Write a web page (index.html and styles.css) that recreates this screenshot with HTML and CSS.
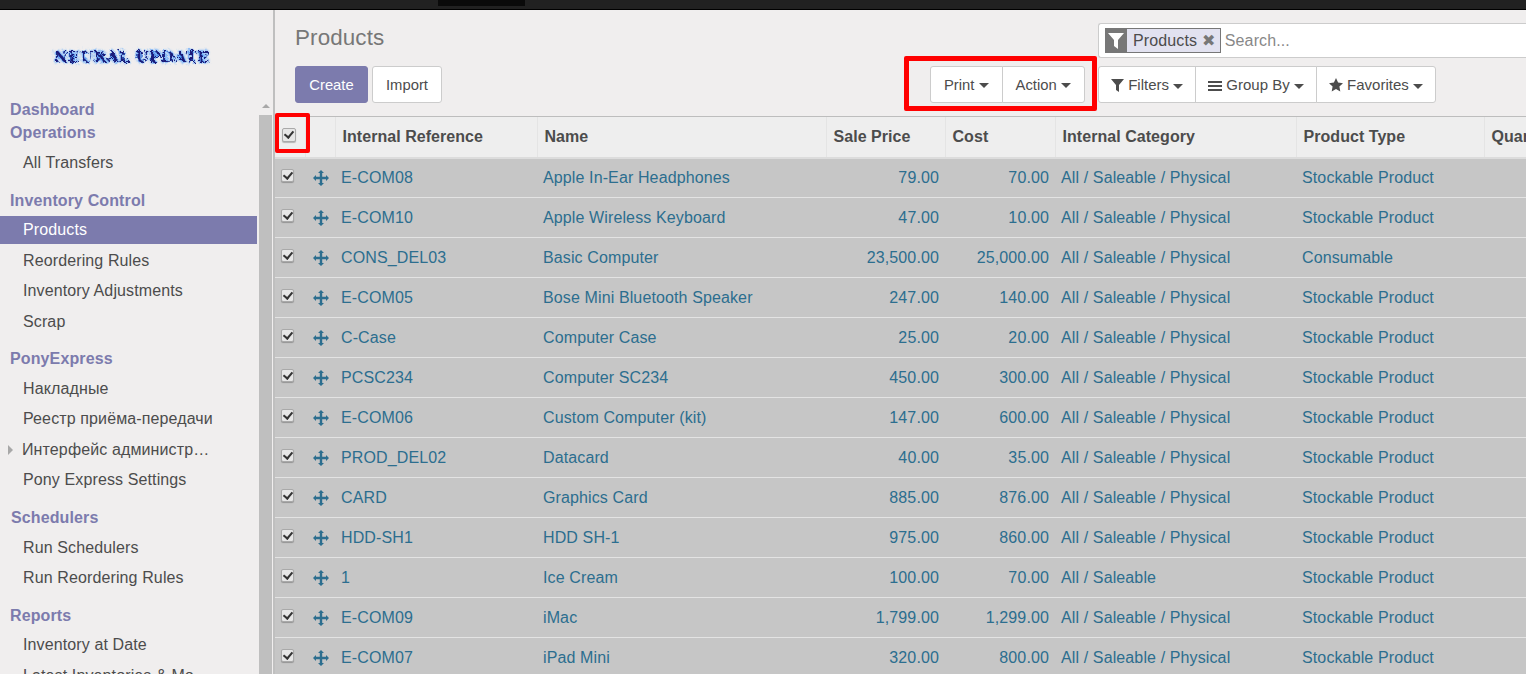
FILE: index.html
```html
<!DOCTYPE html>
<html lang="en">

<head>
    <meta charset="UTF-8">
    <title>Products</title>
    <link rel="stylesheet" href="styles.css">
</head>

<body>
    <svg class="defs" width="0" height="0">
        <filter id="rough" x="-5%" y="-60%" width="110%" height="220%">
            <feTurbulence type="fractalNoise" baseFrequency="0.3" numOctaves="2" seed="4"/>
            <feDisplacementMap in="SourceGraphic" scale="7"/>
        </filter>
    </svg>
    <div class="topbar"><span class="topbar-tab"></span></div>
    <div class="app">
        <aside class="sidebar">
            <div class="logo"><span class="logo-text">NEURAL UPDATE</span></div>
            <div class="menu-wrap">
                <nav class="menu">
                    <div class="menu-head first">Dashboard</div>
                    <div class="menu-head second">Operations</div>
                    <a class="menu-item">All Transfers</a>
                    <div class="menu-head">Inventory Control</div>
                    <a class="menu-item active">Products</a>
                    <a class="menu-item">Reordering Rules</a>
                    <a class="menu-item">Inventory Adjustments</a>
                    <a class="menu-item">Scrap</a>
                    <div class="menu-head">PonyExpress</div>
                    <a class="menu-item">Накладные</a>
                    <a class="menu-item">Реестр приёма-передачи</a>
                    <a class="menu-item has-sub">Интерфейс администр…</a>
                    <a class="menu-item">Pony Express Settings</a>
                    <div class="menu-head shifted">Schedulers</div>
                    <a class="menu-item">Run Schedulers</a>
                    <a class="menu-item">Run Reordering Rules</a>
                    <div class="menu-head">Reports</div>
                    <a class="menu-item">Inventory at Date</a>
                    <a class="menu-item">Latest Inventories &amp; Mo…</a>
                </nav>
                <div class="scrollbar">
                    <span class="scroll-arrow"></span>
                    <span class="scroll-thumb"></span>
                </div>
            </div>
        </aside>

        <main class="content">
            <div class="control-panel">
                <div class="cp-left">
                    <h1>Products</h1>
                    <div class="buttons">
                        <button class="btn btn-primary">Create</button>
                        <button class="btn">Import</button>
                    </div>
                </div>
                <div class="cp-mid">
                    <div class="btn-group marked">
                        <button class="btn">Print <i class="caret"></i></button>
                        <button class="btn">Action <i class="caret"></i></button>
                    </div>
                </div>
                <div class="cp-right">
                    <div class="searchbox">
                        <span class="facet-icon">
                            <svg width="16" height="17" viewBox="0 0 16 17"><path d="M0 1h16L10 8v9L6 14V8z" fill="#fff"/></svg>
                        </span>
                        <span class="facet">Products <b class="facet-x">✖</b></span>
                        <span class="search-text">Search...</span>
                    </div>
                    <div class="btn-group icons">
                        <button class="btn">
                            <svg class="icon" width="13" height="14" viewBox="0 0 13 14"><path d="M0 1h13L8 7v7L5 12V7z" fill="#4c4c4c"/></svg>
                            Filters <i class="caret"></i></button>
                        <button class="btn">
                            <svg class="icon" width="14" height="12" viewBox="0 0 14 12"><path d="M0 1h14v2H0zM0 5h14v2H0zM0 9h14v2H0z" fill="#4c4c4c"/></svg>
                            Group By <i class="caret"></i></button>
                        <button class="btn">
                            <svg class="icon" width="14" height="14" viewBox="0 0 14 14"><path d="M7 0l2.100 4.600 4.900.6-3.600 3.400.9 5L7 11.100 2.700 13.600l.9-5L0 5.200l4.900-.6z" fill="#4c4c4c"/></svg>
                            Favorites <i class="caret"></i></button>
                    </div>
                </div>
            </div>

            <table class="list">
                <colgroup>
                    <col class="c-check"><col class="c-handle"><col class="c-ref"><col class="c-name">
                    <col class="c-price"><col class="c-cost"><col class="c-cat"><col class="c-type"><col class="c-qty">
                </colgroup>
                <thead>
                    <tr>
                        <th class="check"><span class="marked-box"><span class="cb"></span></span></th>
                        <th></th>
                        <th>Internal Reference</th>
                        <th>Name</th>
                        <th>Sale Price</th>
                        <th>Cost</th>
                        <th>Internal Category</th>
                        <th>Product Type</th>
                        <th>Quantity</th>
                    </tr>
                </thead>
                <tbody id="rows"></tbody>
            </table>
        </main>
    </div>

    <script>
        var products = [
            ["E-COM08", "Apple In-Ear Headphones", "79.00", "70.00", "All / Saleable / Physical", "Stockable Product"],
            ["E-COM10", "Apple Wireless Keyboard", "47.00", "10.00", "All / Saleable / Physical", "Stockable Product"],
            ["CONS_DEL03", "Basic Computer", "23,500.00", "25,000.00", "All / Saleable / Physical", "Consumable"],
            ["E-COM05", "Bose Mini Bluetooth Speaker", "247.00", "140.00", "All / Saleable / Physical", "Stockable Product"],
            ["C-Case", "Computer Case", "25.00", "20.00", "All / Saleable / Physical", "Stockable Product"],
            ["PCSC234", "Computer SC234", "450.00", "300.00", "All / Saleable / Physical", "Stockable Product"],
            ["E-COM06", "Custom Computer (kit)", "147.00", "600.00", "All / Saleable / Physical", "Stockable Product"],
            ["PROD_DEL02", "Datacard", "40.00", "35.00", "All / Saleable / Physical", "Stockable Product"],
            ["CARD", "Graphics Card", "885.00", "876.00", "All / Saleable / Physical", "Stockable Product"],
            ["HDD-SH1", "HDD SH-1", "975.00", "860.00", "All / Saleable / Physical", "Stockable Product"],
            ["1", "Ice Cream", "100.00", "70.00", "All / Saleable", "Stockable Product"],
            ["E-COM09", "iMac", "1,799.00", "1,299.00", "All / Saleable / Physical", "Stockable Product"],
            ["E-COM07", "iPad Mini", "320.00", "800.00", "All / Saleable / Physical", "Stockable Product"]
        ];

        var handle = '<svg width="16" height="16" viewBox="0 0 16 16"><path d="M8 0l3 3H9.200v3.800H13V5l3 3-3 3V9.200H9.200V13H11l-3 3-3-3h1.800V9.200H3V11L0 8l3-3v1.800h3.800V3H5z" fill="#2c6e8f"/></svg>';
        var html = "";
        for (var i = 0; i < products.length; i++) {
            var p = products[i];
            html += '<tr><td class="check"><span class="cb"></span></td>' +
                '<td class="handle">' + handle + '</td>' +
                '<td>' + p[0] + '</td><td>' + p[1] + '</td>' +
                '<td class="num">' + p[2] + '</td><td class="num">' + p[3] + '</td>' +
                '<td>' + p[4] + '</td><td>' + p[5] + '</td><td></td></tr>';
        }
        document.getElementById("rows").innerHTML = html;
    </script>
</body>

</html>
```
FILE: styles.css
```css
*, *::before, *::after {
    box-sizing: border-box;
}

html, body {
    margin: 0;
    height: 100%;
    overflow: hidden;
}

body {
    font-family: "Liberation Sans", Arial, sans-serif;
    font-size: 16px;
    letter-spacing: 0.12px;
    color: #4c4c4c;
    background: #f0eeee;
}

.defs {
    display: block;
    height: 0;
}

.topbar {
    height: 10px;
    background: #212121;
    border-bottom: 1px solid #000;
}

.topbar-tab {
    display: block;
    width: 87px;
    height: 6px;
    margin-left: 438px;
    background: #0a0a0a;
}

.app {
    display: flex;
    height: 664px;
}

/* sidebar */
.sidebar {
    width: 275px;
    flex: none;
    border-right: 2px solid #bfbfbf;
    overflow: hidden;
}

.logo {
    height: 88px;
    padding-top: 38px;
    padding-left: 54px;
}

.logo-text {
    display: inline-block;
    font-family: "DejaVu Serif", serif;
    font-size: 15px;
    font-weight: bold;
    letter-spacing: 0.5px;
    white-space: nowrap;
    color: #1c1f7a;
    text-shadow: 0 0 3px #2f8cff, 0 0 2px #2f8cff;
    filter: url(#rough);
}

.menu-wrap {
    display: flex;
    height: 576px;
}

.menu {
    width: 257px;
    flex: none;
}

.menu-head {
    height: 23px;
    margin-top: 11.9px;
    margin-bottom: 4.5px;
    padding-left: 10px;
    line-height: 23px;
    font-weight: bold;
    color: #7c7bad;
}

.menu-head.first {
    margin-top: 0;
    margin-bottom: 0;
}

.menu-head.second {
    margin-top: 0;
    margin-bottom: 5px;
}

.menu-head.shifted {
    padding-left: 11px;
}

.menu-item {
    display: block;
    height: 28px;
    margin-bottom: 2.4px;
    padding-left: 23px;
    line-height: 28px;
    color: #4c4c4c;
    white-space: nowrap;
}

.menu-item.active {
    background: #7c7bad;
    color: #fff;
}

.menu-item.has-sub {
    position: relative;
    padding-left: 22px;
}

.menu-item.has-sub::before {
    content: "";
    position: absolute;
    left: 8px;
    top: 9px;
    border: 5px solid transparent;
    border-left-color: #a8a8a8;
    border-right-width: 0;
}

.scrollbar {
    width: 13px;
    margin-left: 2px;
    display: flex;
    flex-direction: column;
}

.scroll-arrow {
    height: 17px;
    position: relative;
}

.scroll-arrow::before {
    content: "";
    position: absolute;
    left: 3px;
    top: 6px;
    border: 4px solid transparent;
    border-bottom: 4px solid #a8a8a8;
    border-top-width: 0;
}

.scroll-thumb {
    flex: 1;
    background: #bfbfbf;
}

/* main */
.content {
    flex: 1;
    min-width: 0;
    overflow: hidden;
}

.control-panel {
    display: flex;
    height: 106px;
}

.cp-left {
    flex: none;
    width: 630px;
    padding-left: 20px;
}

h1 {
    margin: 0;
    padding-top: 15px;
    height: 56px;
    font-size: 22.4px;
    font-weight: normal;
    line-height: 26px;
    color: #777;
}

.buttons {
    display: flex;
    gap: 4px;
}

.btn {
    height: 37px;
    padding: 0 13px;
    font-family: inherit;
    font-size: 14.8px;
    color: #4c4c4c;
    background: #fff;
    border: 1px solid #ccc;
    border-radius: 3px;
    white-space: nowrap;
}

.btn-primary {
    width: 73px;
    padding: 0;
    background: #7c7bad;
    border-color: #7c7bad;
    color: #fff;
}

.cp-mid {
    flex: none;
    width: 193px;
    padding-top: 56px;
}

.btn-group {
    display: flex;
}

.btn-group .btn {
    border-radius: 0;
    margin-left: -1px;
}

.btn-group .btn:first-child {
    border-radius: 3px 0 0 3px;
    margin-left: 0;
}

.btn-group .btn:last-child {
    border-radius: 0 3px 3px 0;
}

.btn-group.icons .btn {
    padding: 0 12px;
    font-size: 15px;
}

.marked {
    position: relative;
    width: 155px;
    margin-left: 25px;
}

.marked::after {
    content: "";
    position: absolute;
    left: -26px;
    top: -10px;
    width: 193px;
    height: 55px;
    border: 5px solid #f00;
    border-radius: 2px;
}

.caret {
    display: inline-block;
    vertical-align: middle;
    border-top: 5px solid #4c4c4c;
    border-left: 5px solid transparent;
    border-right: 5px solid transparent;
}

.icon {
    vertical-align: -2px;
}

.cp-right {
    flex: none;
    width: 440px;
    padding-top: 13px;
}

.searchbox {
    display: flex;
    align-items: center;
    width: 440px;
    height: 35px;
    margin-bottom: 8px;
    padding-left: 6px;
    background: #fff;
    border: 1px solid #ccc;
    border-right: 0;
    border-radius: 3px 0 0 3px;
}

.facet-icon {
    display: flex;
    align-items: center;
    justify-content: center;
    width: 22px;
    height: 25px;
    background: #777;
}

.facet {
    height: 25px;
    padding: 0 5px 0 6px;
    margin-right: 4px;
    line-height: 23px;
    background: #e2e2f0;
    border: 1px solid #777;
    border-left: 0;
    white-space: nowrap;
}

.facet-x {
    font-size: 16px;
    font-weight: normal;
    color: #777;
}

.search-text {
    color: #888;
}

/* table */
.list {
    width: 1300px;
    border-collapse: collapse;
    table-layout: fixed;
}

.c-check { width: 30px; }
.c-handle { width: 30px; }
.c-ref { width: 202px; }
.c-name { width: 289px; }
.c-price { width: 119px; }
.c-cost { width: 110px; }
.c-cat { width: 241px; }
.c-type { width: 188px; }
.c-qty { width: 91px; }

.list th {
    height: 41px;
    padding: 0 7px;
    text-align: left;
    font-weight: bold;
    letter-spacing: 0.05px;
    background: #eeeeee;
    border-top: 1px solid #bdbdbd;
    border-left: 1px solid #e4e4e4;
    border-bottom: 2px solid #dcdcdc;
    white-space: nowrap;
}

.list th:first-child {
    border-left: 0;
}

.list td {
    height: 40px;
    padding: 0 6px;
    background: #c6c6c6;
    color: #2c6e8f;
    border-bottom: 1px solid #e3e3e3;
    white-space: nowrap;
    overflow: hidden;
}

.list .num {
    text-align: right;
}

.list td.check {
    padding: 0 0 0 6px;
}

.list th.check {
    padding: 0 0 0 7px;
}

.list .handle {
    padding: 0 0 0 8px;
    line-height: 0;
}

.cb {
    position: relative;
    display: block;
    width: 13px;
    height: 13px;
    margin-bottom: 4px;
    background: #e6e6e6;
    border: 1px solid #a9a9a9;
    border-radius: 2px;
    box-shadow: 0 1px 1px rgba(0, 0, 0, 0.25);
}

.cb::after {
    content: "";
    position: absolute;
    left: 3px;
    top: 0;
    width: 6px;
    height: 9px;
    border: solid #333;
    border-width: 0 2.5px 2.5px 0;
    transform: rotate(40deg);
}

.marked-box {
    position: relative;
    display: block;
}

.marked-box .cb {
    width: 14px;
    height: 14px;
    margin-bottom: 3px;
}

.marked-box::after {
    content: "";
    position: absolute;
    left: -7px;
    top: -15px;
    width: 35px;
    height: 40px;
    border: 4px solid #f00;
    border-radius: 2px;
}
```
